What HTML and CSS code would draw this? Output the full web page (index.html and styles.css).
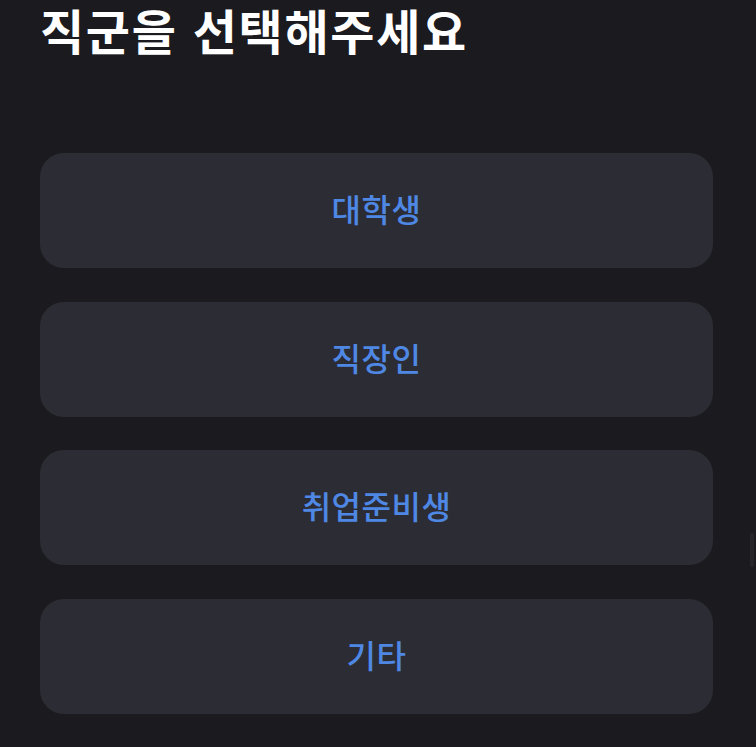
FILE: index.html
```html
<!DOCTYPE html>
<html lang="ko">
<head>
<meta charset="utf-8">
<link rel="stylesheet" href="styles.css">
</head>
<body>
<main class="page">
  <h1 class="title">직군을 선택해주세요</h1>
  <div class="options">
    <button class="option">대학생</button>
    <button class="option">직장인</button>
    <button class="option">취업준비생</button>
    <button class="option">기타</button>
  </div>
</main>
<div class="scrollbar"></div>
</body>
</html>
```
FILE: styles.css
```css
html, body {
  margin: 0;
  padding: 0;
  background: #1b1b1f;
  height: 100%;
  overflow: hidden;
}
body {
  font-family: "Noto Sans CJK KR", "Noto Sans", sans-serif;
}
.page {
  padding: 0 43px 0 40px;
}
.title {
  margin: 0;
  font-size: 48px;
  line-height: 58px;
  font-weight: 700;
  color: #ffffff;
  letter-spacing: 1.7px;
}
.options {
  margin-top: 95px;
  display: flex;
  flex-direction: column;
  gap: 33.5px;
}
.option {
  height: 115px;
  border: none;
  border-radius: 24px;
  background: #2c2d34;
  color: #4f88e4;
  font-family: inherit;
  font-size: 32px;
  font-weight: 500;
  letter-spacing: 0.5px;
  cursor: pointer;
  padding: 0 0 5px 0;
}
.scrollbar {
  position: absolute;
  right: 2px;
  top: 533px;
  width: 4px;
  height: 34px;
  border-radius: 2px;
  background: #25252a;
}
```
